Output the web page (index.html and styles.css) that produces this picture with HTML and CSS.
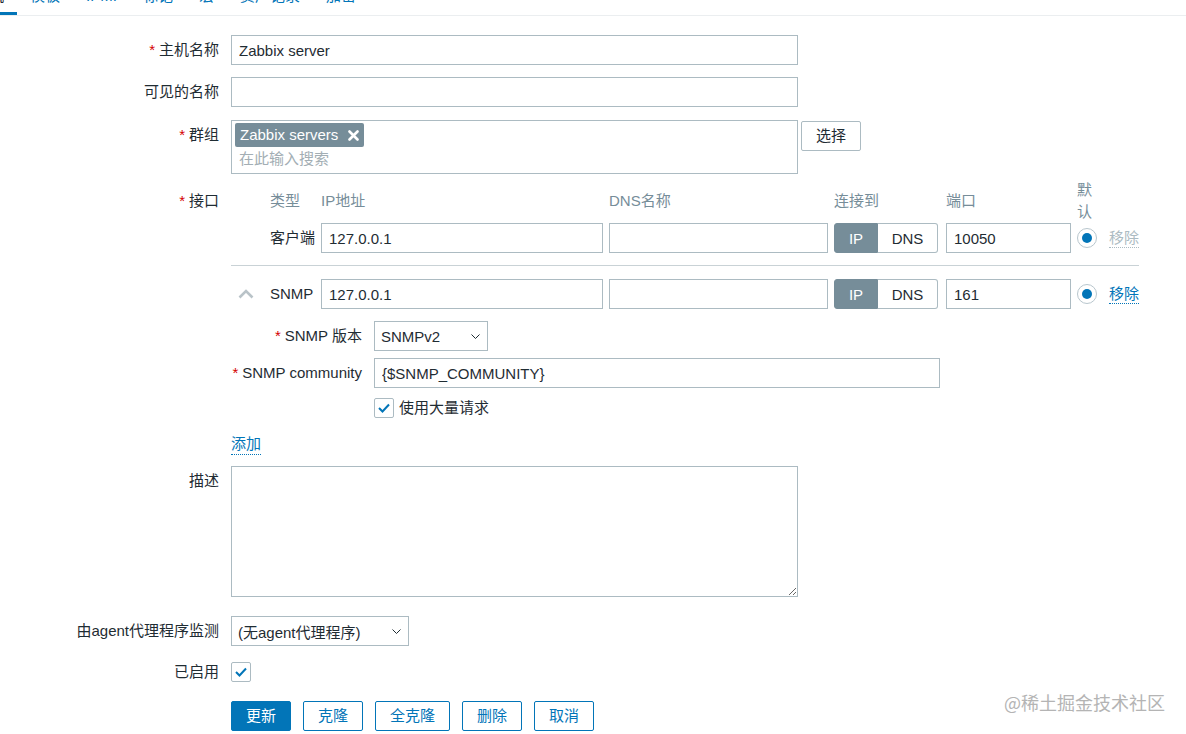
FILE: index.html
```html
<!DOCTYPE html>
<html lang="zh-CN">
<head>
<meta charset="utf-8">
<title>主机</title>
<link rel="stylesheet" href="styles.css">
</head>
<body>
<nav class="tabs">
  <span class="tab tab-active">主机</span>
  <span class="tab">模板</span>
  <span class="tab">IPMI</span>
  <span class="tab">标记</span>
  <span class="tab">宏</span>
  <span class="tab">资产记录</span>
  <span class="tab">加密</span>
</nav>

<form class="form">
  <div class="row row-first">
    <label class="label"><span class="req">*</span>主机名称</label>
    <input class="input w-wide" value="Zabbix server">
  </div>

  <div class="row row-2">
    <label class="label">可见的名称</label>
    <input class="input w-wide" value="">
  </div>

  <div class="row row-3">
    <label class="label"><span class="req">*</span>群组</label>
    <div class="multiselect">
      <span class="tag">Zabbix servers
        <svg class="tag-x" width="11" height="11" viewBox="0 0 11 11"><path d="M1.5 1.5 L9.5 9.5 M9.5 1.5 L1.5 9.5" stroke="#fff" stroke-width="2.6" stroke-linecap="round"/></svg>
      </span>
      <div class="placeholder">在此输入搜索</div>
    </div>
    <button type="button" class="btn-select">选择</button>
  </div>

  <div class="row row-4">
    <label class="label label-iface"><span class="req">*</span>接口</label>
    <div class="field">
      <div class="iface">
        <div class="ih"></div>
        <div class="ih">类型</div>
        <div class="ih">IP地址</div>
        <div class="ih">DNS名称</div>
        <div class="ih">连接到</div>
        <div class="ih">端口</div>
        <div class="ih">默认</div>
        <div class="ih"></div>

        <div></div>
        <div class="itype">客户端</div>
        <div><input class="input w-ip" value="127.0.0.1"></div>
        <div><input class="input w-dns" value=""></div>
        <div class="toggle"><span class="toggle-on">IP</span><span class="toggle-off">DNS</span></div>
        <div><input class="input w-port" value="10050"></div>
        <div class="radio"><span class="radio-dot"></span></div>
        <div class="remove-cell"><span class="link link-disabled">移除</span></div>

        <div class="sep"></div>

        <div class="chev">
          <svg width="16" height="10" viewBox="0 0 16 10"><polyline points="1.5,8.5 8,2 14.5,8.5" fill="none" stroke="#b9c3c8" stroke-width="2.6"/></svg>
        </div>
        <div class="itype">SNMP</div>
        <div><input class="input w-ip" value="127.0.0.1"></div>
        <div><input class="input w-dns" value=""></div>
        <div class="toggle"><span class="toggle-on">IP</span><span class="toggle-off">DNS</span></div>
        <div><input class="input w-port" value="161"></div>
        <div class="radio"><span class="radio-dot"></span></div>
        <div class="remove-cell"><span class="link">移除</span></div>
      </div>

      <div class="snmp">
        <div class="drow">
          <label class="dlabel"><span class="req">*</span>SNMP 版本</label>
          <div class="select w-ver"><span>SNMPv2</span>
            <svg width="9" height="5" viewBox="0 0 9 5"><polyline points="0.5,0.5 4.5,4.5 8.5,0.5" fill="none" stroke="#1f2c33" stroke-width="1"/></svg>
          </div>
        </div>
        <div class="drow drow-2">
          <label class="dlabel"><span class="req">*</span>SNMP community</label>
          <input class="input w-comm" value="{$SNMP_COMMUNITY}">
        </div>
        <div class="drow drow-3">
          <span class="dlabel dlabel-empty"></span>
          <span class="checkbox">
            <svg width="12" height="10" viewBox="0 0 12 10"><polyline points="1,5 4.5,8.5 11,1.5" fill="none" stroke="#0275b8" stroke-width="2"/></svg>
          </span>
          <span class="check-text">使用大量请求</span>
        </div>
      </div>

      <div class="add-row"><span class="link">添加</span></div>
    </div>
  </div>

  <div class="row row-desc">
    <label class="label">描述</label>
    <textarea class="textarea"></textarea>
  </div>

  <div class="row row-proxy">
    <label class="label">由agent代理程序监测</label>
    <div class="select w-proxy"><span>(无agent代理程序)</span>
      <svg width="9" height="5" viewBox="0 0 9 5"><polyline points="0.5,0.5 4.5,4.5 8.5,0.5" fill="none" stroke="#1f2c33" stroke-width="1"/></svg>
    </div>
  </div>

  <div class="row row-enabled">
    <label class="label label-short">已启用</label>
    <span class="checkbox">
      <svg width="12" height="10" viewBox="0 0 12 10"><polyline points="1,5 4.5,8.5 11,1.5" fill="none" stroke="#0275b8" stroke-width="2"/></svg>
    </span>
  </div>

  <div class="row row-buttons">
    <span class="label"></span>
    <div class="buttons">
      <button type="button" class="btn btn-primary">更新</button>
      <button type="button" class="btn">克隆</button>
      <button type="button" class="btn">全克隆</button>
      <button type="button" class="btn">删除</button>
      <button type="button" class="btn">取消</button>
    </div>
  </div>
</form>

<div class="watermark">@稀土掘金技术社区</div>
</body>
</html>
```

FILE: styles.css
```css
html, body {
  margin: 0;
  padding: 0;
  background: #ffffff;
}

body {
  font-family: "Liberation Sans", Arial, "Noto Sans CJK SC", sans-serif;
  font-size: 15px;
  color: #1f2c33;
  width: 1186px;
  height: 734px;
  overflow: hidden;
  position: relative;
}

input, textarea, button {
  font-family: inherit;
  font-size: 15px;
  color: #1f2c33;
}

/* Tabs */
.tabs {
  display: flex;
  margin-top: -12px;
  margin-left: -39px;
  border-bottom: 1px solid #ebeef0;
}

.tab {
  padding: 0 13px 9px;
  line-height: 15px;
  color: #0275b8;
  border-bottom: 3px solid transparent;
  white-space: nowrap;
}

.tab-active {
  color: #1f2c33;
  border-bottom-color: #0275b8;
}

/* Form */
.form {
  display: flex;
  flex-direction: column;
  margin: 0;
}

.row {
  display: flex;
  align-items: flex-start;
  gap: 12px;
}

.row-first { margin-top: 19px; }
.row-2 { margin-top: 12px; }
.row-3 { margin-top: 13px; }
.row-4 { margin-top: 5px; }
.row-desc { margin-top: 11px; }
.row-proxy { margin-top: 19px; }
.row-enabled { margin-top: 16px; }
.row-buttons { margin-top: 19px; }

.label {
  width: 219px;
  flex: none;
  text-align: right;
  line-height: 30px;
  white-space: nowrap;
}

.label-iface { line-height: 44px; }
.label-short { line-height: 20px; }

.req {
  color: #d40000;
  margin-right: 4px;
}

.input {
  box-sizing: border-box;
  height: 30px;
  border: 1px solid #acbbc2;
  border-radius: 0;
  padding: 0 7px;
  margin: 0;
  background: #fff;
  outline: none;
  display: block;
}

.w-wide { width: 567px; }
.w-ip { width: 282px; }
.w-dns { width: 219px; }
.w-port { width: 125px; }
.w-comm { width: 566px; }

/* Multiselect */
.multiselect {
  box-sizing: border-box;
  width: 567px;
  height: 54px;
  border: 1px solid #acbbc2;
  padding: 2px 3px 0;
}

.tag {
  display: inline-flex;
  align-items: center;
  gap: 10px;
  height: 24px;
  padding: 0 5px;
  background: #768d99;
  color: #ffffff;
  border-radius: 2px;
  line-height: 24px;
}

.tag-x { display: block; }

.placeholder {
  margin-top: 2px;
  padding-left: 4px;
  line-height: 20px;
  color: #a3aeb4;
}

.btn-select {
  margin: 1px 0 0 -9px;
  height: 30px;
  padding: 0 14px;
  background: #fff;
  border: 1px solid #acbbc2;
  border-radius: 2px;
  line-height: 28px;
}

/* Interfaces */
.field {
  display: flex;
  flex-direction: column;
  align-items: flex-start;
}

.iface {
  display: grid;
  grid-template-columns: 39px 51px 288px 225px 112px 131px 20px 42px;
  align-items: center;
}

.ih {
  line-height: 22px;
  color: #768d99;
}

.itype {
  line-height: 30px;
  white-space: nowrap;
}

.chev {
  padding-left: 7px;
  display: flex;
  align-items: center;
}

.chev svg { display: block; }

.sep {
  grid-column: 1 / -1;
  border-top: 1px solid #c9d2d6;
  margin: 12px 0 13px;
  height: 0;
}

.toggle {
  display: flex;
  width: 104px;
  height: 30px;
}

.toggle-on,
.toggle-off {
  box-sizing: border-box;
  height: 30px;
  display: flex;
  align-items: center;
  justify-content: center;
}

.toggle-on {
  width: 44px;
  background: #768d99;
  color: #ffffff;
  border: 1px solid #768d99;
  border-radius: 3px 0 0 3px;
}

.toggle-off {
  width: 60px;
  background: #ffffff;
  border: 1px solid #acbbc2;
  border-left: none;
  border-radius: 0 3px 3px 0;
}

.radio {
  box-sizing: border-box;
  width: 20px;
  height: 20px;
  border: 1px solid #b8c6cd;
  border-radius: 50%;
  display: flex;
  align-items: center;
  justify-content: center;
}

.radio-dot {
  width: 10px;
  height: 10px;
  border-radius: 50%;
  background: #0275b8;
}

.remove-cell {
  padding-left: 12px;
  white-space: nowrap;
}

.link {
  display: inline-block;
  color: #0275b8;
  line-height: 18px;
  border-bottom: 1px dotted #0275b8;
}

.link-disabled {
  color: #acbbc2;
  border-bottom-color: #acbbc2;
}

/* SNMP details */
.snmp {
  margin-top: 12px;
  display: flex;
  flex-direction: column;
}

.drow {
  display: flex;
  align-items: center;
  gap: 12px;
}

.drow-2 { margin-top: 7px; }
.drow-3 { margin-top: 10px; }

.dlabel {
  width: 131px;
  flex: none;
  text-align: right;
  line-height: 30px;
  white-space: nowrap;
}

.dlabel-empty { line-height: 20px; }

.select {
  box-sizing: border-box;
  height: 30px;
  border: 1px solid #acbbc2;
  padding: 0 7px 0 6px;
  display: flex;
  align-items: center;
  justify-content: space-between;
  background: #fff;
  white-space: nowrap;
}

.select svg { display: block; }

.w-ver { width: 114px; }
.w-proxy { width: 178px; }

.checkbox {
  box-sizing: border-box;
  width: 20px;
  height: 20px;
  border: 1px solid #acbbc2;
  border-radius: 2px;
  display: flex;
  align-items: center;
  justify-content: center;
  flex: none;
  background: #fff;
}

.checkbox svg { display: block; }

.check-text {
  margin-left: -7px;
  line-height: 20px;
}

.add-row {
  margin-top: 16px;
  line-height: 20px;
}

.add-row .link { line-height: 20px; }

/* Description */
.textarea {
  box-sizing: border-box;
  display: block;
  width: 567px;
  height: 131px;
  border: 1px solid #acbbc2;
  margin: 0;
  padding: 4px 7px;
  resize: both;
  outline: none;
}

/* Buttons */
.buttons {
  display: flex;
  gap: 12px;
}

.btn {
  box-sizing: border-box;
  height: 30px;
  padding: 0 14px;
  margin: 0;
  border: 1px solid #0275b8;
  border-radius: 2px;
  background: #ffffff;
  color: #0275b8;
  line-height: 28px;
}

.btn-primary {
  background: #0275b8;
  color: #ffffff;
}

/* Watermark overlay */
.watermark {
  position: absolute;
  left: 1004px;
  top: 689px;
  font-family: "Noto Sans CJK SC", sans-serif;
  font-size: 18px;
  line-height: 26px;
  color: #b4b4b4;
  white-space: nowrap;
}
```
